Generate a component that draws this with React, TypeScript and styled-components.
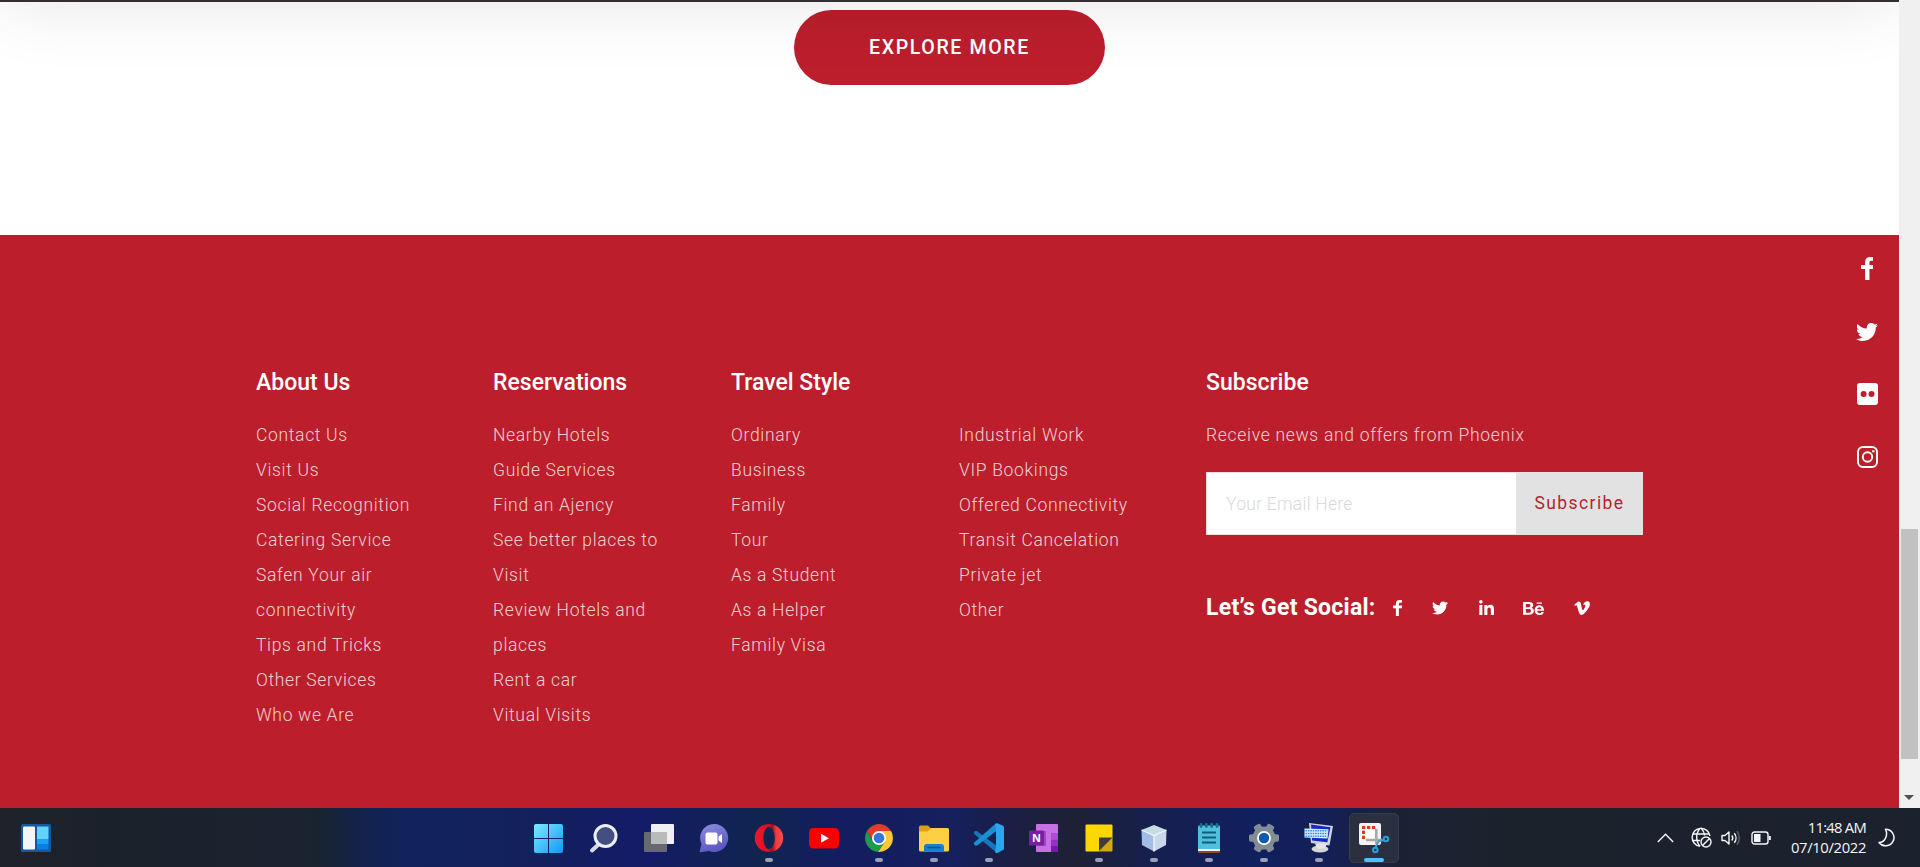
import React from "react";
import styled, { createGlobalStyle } from "styled-components";
import { FaTwitter, FaLinkedinIn, FaBehance, FaVimeoV } from "react-icons/fa";

const RED = "#bc1e2c";

const GlobalStyle = createGlobalStyle`
  * { box-sizing: border-box; }
  body { margin: 0; overflow: hidden; font-family: Roboto, "Liberation Sans", sans-serif; }
  ul { list-style: none; margin: 0; padding: 0; }
  h3, h4, p { margin: 0; }
`;

const Screen = styled.div`
  display: flex;
  flex-direction: column;
  width: 1920px;
  height: 867px;
  overflow: hidden;
`;

const Browser = styled.div`
  display: flex;
  height: 808px;
`;

const Page = styled.main`
  position: relative;
  flex: 1;
  overflow: hidden;
  background: #fff;
`;

const HeaderEdge = styled.div`
  position: absolute;
  z-index: 2;
  left: 0;
  right: 0;
  top: -118px;
  height: 120px;
  background: #332e30;
  box-shadow: 0 0 75px rgba(0, 0, 0, 0.11);
`;

const Hero = styled.section`
  display: flex;
  justify-content: center;
  height: 235px;
  padding-top: 10px;
`;

const ExploreButton = styled.button`
  width: 311px;
  height: 75px;
  padding: 0;
  border: 0;
  border-radius: 38px;
  background: ${RED};
  color: #fff;
  font: 500 19.6px/75px Roboto, sans-serif;
  letter-spacing: 1.6px;
`;

const Footer = styled.footer`
  display: flex;
  justify-content: space-between;
  height: 573px;
  padding: 0 21px 0 256px;
  background: ${RED};
`;

const Columns = styled.div`
  display: grid;
  grid-template-columns: 237px 238px 228px 247px 437px;
  padding-top: 131px;
`;

const Column = styled.section`
  display: flex;
  flex-direction: column;
`;

const Title = styled.h3`
  height: 34px;
  margin-bottom: 18px;
  color: #fff;
  font-size: 23px;
  font-weight: 500;
  line-height: 34px;
`;

const LinkItem = styled.li`
  color: rgba(255, 255, 255, 0.8);
  font-size: 17.5px;
  font-weight: 300;
  line-height: 35px;
  letter-spacing: 0.67px;
  white-space: pre-line;
`;

const Lead = styled.p`
  color: rgba(255, 255, 255, 0.8);
  font-size: 17.5px;
  font-weight: 300;
  line-height: 35px;
  letter-spacing: 0.7px;
`;

const Form = styled.form`
  display: flex;
  width: 437px;
  height: 63px;
  margin-top: 19px;
  border: 1px solid #f6d9dc;
  background: #fff;
`;

const Email = styled.input`
  flex: 1;
  min-width: 0;
  padding: 0 19px;
  border: 0;
  outline: 0;
  background: #fff;
  font: 300 17.5px Roboto, sans-serif;
  letter-spacing: 0.26px;
  &::placeholder { color: #d9d9d9; opacity: 1; }
`;

const SubmitButton = styled.button`
  width: 127px;
  margin: -1px;
  padding: 0 0 2px;
  border: 0;
  background: #e2e2e2;
  color: ${RED};
  font: 400 17.5px Roboto, sans-serif;
  letter-spacing: 1.4px;
`;

const SocialRow = styled.div`
  display: flex;
  align-items: center;
  height: 34px;
  margin-top: 55px;
  color: #fff;
`;

const SocialTitle = styled.h4`
  width: 178px;
  font-size: 23px;
  font-weight: 700;
  letter-spacing: 0.26px;
  white-space: nowrap;
`;

const SocialLink = styled.a<{ $w: number }>`
  display: flex;
  justify-content: center;
  width: ${(p) => p.$w}px;
  padding-top: 2px;
`;

const SideRail = styled.nav`
  display: flex;
  flex-direction: column;
  width: 22px;
  padding-top: 2px;
`;

const RailLink = styled.a`
  display: flex;
  align-items: center;
  justify-content: center;
  height: 63px;
  color: #fff;
  &:nth-child(n + 3) { padding-bottom: 1px; }
`;

const ScrollTrack = styled.div`
  display: flex;
  flex-direction: column;
  justify-content: space-between;
  align-items: center;
  width: 21px;
  padding: 529px 1px 8px 0;
  background: #f0f0f0;
`;

const ScrollThumb = styled.div`
  width: 17px;
  height: 230px;
  background: #c1c1c1;
`;

const ScrollArrow = styled.div`
  border: 5px solid transparent;
  border-top-color: #505050;
  border-bottom: 0;
`;

const Taskbar = styled.div`
  display: grid;
  grid-template-columns: 522px 880px 1fr;
  height: 59px;
  background: linear-gradient(90deg, #1f222a 0, #1b212b 100px, #19232f 320px, #12234c 360px, #11235a 400px,
    #13225a 500px, #131b66 640px, #11254f 760px, #131d60 830px, #15205e 950px, #1b1f40 1020px, #1e2136 1075px,
    #161f50 1160px, #10205f 1260px, #141f55 1330px, #1b2133 1400px, #1c222c 1500px, #1b212d 1920px);
`;

const TaskLeft = styled.div`
  display: flex;
  align-items: center;
  padding: 0 0 2px 20px;
`;

const TaskIcons = styled.div`
  display: flex;
`;

const TaskSlot = styled.div<{ $active?: boolean }>`
  display: flex;
  flex-direction: column;
  align-items: center;
  width: 50px;
  height: 50px;
  margin: 5px 3px 0 2px;
  padding-top: 9px;
  border-radius: 5px;
  border: 1px solid ${(p) => (p.$active ? "#353c4c" : "transparent")};
  background: ${(p) => (p.$active ? "#2a3040" : "none")};
`;

const RunMark = styled.span<{ $active?: boolean }>`
  width: ${(p) => (p.$active ? 20 : 8)}px;
  height: 4px;
  margin-top: 3px;
  border-radius: 2px;
  background: ${(p) => (p.$active ? "#4cc2ff" : "#9b9fb5")};
`;

const Tray = styled.div`
  display: flex;
  justify-content: flex-end;
  align-items: center;
  padding-right: 25px;
  color: #f5f7fa;
`;

const TrayIcon = styled.span<{ $gap: number }>`
  display: flex;
  margin-right: ${(p) => p.$gap}px;
`;

const Clock = styled.div`
  display: flex;
  flex-direction: column;
  align-items: flex-end;
  margin-right: 12px;
  padding-bottom: 2px;
  color: #f5f7fa;
  font: 400 14.8px/20px "Open Sans", "Noto Sans", sans-serif;
`;

const ClockLine = styled.span<{ $tracking: number }>`
  letter-spacing: ${(p) => p.$tracking}px;
`;

const columns = [
  { title: "About Us", links: ["Contact Us", "Visit Us", "Social Recognition", "Catering Service", "Safen Your air\nconnectivity", "Tips and Tricks", "Other Services", "Who we Are"] },
  { title: "Reservations", links: ["Nearby Hotels", "Guide Services", "Find an Ajency", "See better places to\nVisit", "Review Hotels and\nplaces", "Rent a car", "Vitual Visits"] },
  { title: "Travel Style", links: ["Ordinary", "Business", "Family", "Tour", "As a Student", "As a Helper", "Family Visa"] },
  { title: "", links: ["Industrial Work", "VIP Bookings", "Offered Connectivity", "Transit Cancelation", "Private jet", "Other"] },
];

const Icon = ({ children }: { children: React.ReactNode }) => (
  <svg width="32" height="32" viewBox="0 0 32 32">{children}</svg>
);

const FlickrIcon = () => (
  <svg width="21" height="22" viewBox="0 0 21 22">
    <path fillRule="evenodd" fill="#fff" d="M3 0h15a3 3 0 0 1 3 3v16a3 3 0 0 1-3 3H3a3 3 0 0 1-3-3V3a3 3 0 0 1 3-3zM6.600 8a3 3 0 1 0 0 6 3 3 0 0 0 0-6zm7.900 0a3 3 0 1 0 0 6 3 3 0 0 0 0-6z" />
  </svg>
);

const InstagramIcon = () => (
  <svg width="21" height="22" viewBox="0 0 21 22" fill="none" stroke="#fff" strokeWidth="1.900">
    <rect x="1" y="1" width="19" height="20" rx="5" />
    <circle cx="10.500" cy="11" r="4.700" />
    <circle cx="16.300" cy="5.300" r="1.300" fill="#fff" stroke="none" />
  </svg>
);

const FacebookIcon = ({ h }: { h: number }) => (
  <svg width={h * 0.56} height={h} viewBox="0 0 12.5 23" preserveAspectRatio="none">
    <path fill="#fff" d="M4 23V12H0V8h4V5.200C4 1.800 6 0 9 0h3.500v3.800H10C8.600 3.800 8.200 4.500 8.200 5.600V8h4.300v4H8.200v11z" />
  </svg>
);

const apps: { name: string; running?: boolean; active?: boolean; art: React.ReactNode }[] = [
  {
    name: "start",
    art: (
      <>
        <defs>
          <linearGradient id="win" x1="0" y1="0" x2="1" y2="1">
            <stop offset="0" stopColor="#7aebff" /><stop offset="1" stopColor="#1497f5" />
          </linearGradient>
        </defs>
        <path fill="url(#win)" d="M3 1h12v14H1V3a2 2 0 0 1 2-2zM16 1h12a2 2 0 0 1 2 2v12H16zM1 16h14v14H3a2 2 0 0 1-2-2zM16 16h14v12a2 2 0 0 1-2 2H16z" />
      </>
    ),
  },
  {
    name: "search",
    art: (
      <>
        <path d="M10.500 21.500L4 27.500" stroke="#d5dbe6" strokeWidth="4" strokeLinecap="round" />
        <circle cx="17.500" cy="13" r="10.500" fill="#454e80" stroke="#eceff5" strokeWidth="3" />
      </>
    ),
  },
  {
    name: "tasks",
    art: (
      <>
        <rect x="1" y="9" width="23" height="20" rx="1" fill="#66696f" />
        <rect x="8" y="1" width="23" height="20" rx="1" fill="#f0f0f4" />
        <path d="M8 9h16v12H9a1 1 0 0 1-1-1z" fill="#b9babc" />
      </>
    ),
  },
  {
    name: "chat",
    art: (
      <>
        <defs>
          <linearGradient id="chat" x1="0" y1="0" x2="0.4" y2="1">
            <stop offset="0" stopColor="#8f8fdd" /><stop offset="1" stopColor="#5a58c2" />
          </linearGradient>
        </defs>
        <path fill="url(#chat)" d="M16 1a14 14 0 1 1-5 27l-8.500 1.200a.8.8 0 0 1-.8-1L3.500 21A14 14 0 0 1 16 1z" />
        <rect x="7.500" y="9.500" width="12" height="12" rx="2" fill="#fff" />
        <path d="M20.500 13.500l3.500-2.500v9L20.500 17.500z" fill="#fff" />
      </>
    ),
  },
  {
    name: "opera",
    running: true,
    art: (
      <>
        <defs>
          <linearGradient id="op" x1="0" y1="0" x2="1" y2="0">
            <stop offset="0" stopColor="#f8152c" /><stop offset="0.45" stopColor="#d81125" /><stop offset="0.62" stopColor="#a30d1b" /><stop offset="0.75" stopColor="#f03a40" /><stop offset="1" stopColor="#fb4c4c" />
          </linearGradient>
        </defs>
        <path fillRule="evenodd" fill="url(#op)" d="M16 1a14.200 14 0 1 1 0 28 14.200 14 0 0 1 0-28zM15.700 4C12.500 4 10.500 9 10.500 15s2 11 5.200 11 6-4.500 6-11-2.800-11-6-11z" />
      </>
    ),
  },
  {
    name: "youtube",
    art: (
      <>
        <rect x="1" y="5" width="30" height="20.500" rx="4.500" fill="#f80000" />
        <path d="M13 10.700l8 4.500-8 4.600z" fill="#fff" />
      </>
    ),
  },
  {
    name: "chrome",
    running: true,
    art: (
      <>
        <path d="M3.900 8A14 14 0 0 1 28.100 8H16L10 18z" fill="#e33b2e" />
        <path d="M28.100 8A14 14 0 0 1 16 29l-1 0 7-11-6-10z" fill="#fcc934" />
        <path d="M3.900 8l6.100 10.500L16 22l6-3.500L15 29A14 14 0 0 1 3.900 8z" fill="#1d9a4b" />
        <circle cx="16" cy="15" r="7" fill="#fff" />
        <circle cx="16" cy="15" r="5.300" fill="#3474e0" />
      </>
    ),
  },
  {
    name: "files",
    running: true,
    art: (
      <>
        <path d="M1 4a1.500 1.500 0 0 1 1.500-1.500H10L13 5.500V11H1z" fill="#dc9f10" />
        <path d="M1 8.500h8.500L13 5h16.500A1.500 1.500 0 0 1 31 6.500V27a1.500 1.500 0 0 1-1.500 1.500h-27A1.500 1.500 0 0 1 1 27z" fill="#fdcf45" />
        <path d="M6 28.500V24a3 3 0 0 1 3-3h14a3 3 0 0 1 3 3v4.500z" fill="#1280d0" />
        <rect x="9.500" y="23.800" width="13" height="1.400" fill="#0a4f92" />
      </>
    ),
  },
  {
    name: "code",
    running: true,
    art: (
      <>
        <path d="M1.700 8.300a1.800 1.800 0 0 1 2.500-.1L24 23v7L1.200 11a1.700 1.700 0 0 1 0-2.200z" fill="#1377b9" />
        <path d="M1.200 19.500L22.500.800 24 7.500 4.400 22.300a1.800 1.800 0 0 1-2.400-.1l-.8-.8a1.400 1.400 0 0 1 0-1.900z" fill="#198fd6" />
        <path d="M22 1.200A2 2 0 0 1 24.200.2l5.500 2.400A2 2 0 0 1 31 4.500v21a2 2 0 0 1-1.300 1.800L24.200 30a2 2 0 0 1-2.200-1l1-5V7z" fill="#2ba5ee" />
      </>
    ),
  },
  {
    name: "notes",
    art: (
      <>
        <rect x="8" y="1" width="22" height="28" rx="1" fill="#c770e6" />
        <path d="M23 10h7v7h-7z" fill="#ae4bd5" />
        <path d="M23 17h7v6h-7z" fill="#9332bf" />
        <path d="M23 23h7v5a1 1 0 0 1-1 1h-6z" fill="#7719aa" />
        <path d="M8 8h10v15H8z" fill="#a046c4" />
        <rect x="1" y="7.500" width="15" height="15" rx="1.200" fill="#7a1fa2" />
        <text x="8.500" y="19" textAnchor="middle" fontFamily="Open Sans, sans-serif" fontWeight="700" fontSize="11" fill="#fff">N</text>
      </>
    ),
  },
  {
    name: "sticky",
    running: true,
    art: (
      <>
        <path d="M3.500 1.500h25a1 1 0 0 1 1 1V15L16 28.500H3.500a1 1 0 0 1-1-1v-25a1 1 0 0 1 1-1z" fill="#fcd703" />
        <path d="M29.500 14.500v13a1 1 0 0 1-1 1H16z" fill="#d9a514" />
        <path d="M16 14.500h13.500L16 28z" fill="#3c3b3d" />
      </>
    ),
  },
  {
    name: "cube",
    running: true,
    art: (
      <>
        <path d="M16 2l12.500 5L16 12.500 3.500 7z" fill="#c4dde2" />
        <path d="M3.500 7L16 12.500V28.500L4 22z" fill="#a3bde6" />
        <path d="M28.500 7L16 12.500V28.500L28 22z" fill="#c9d7ea" />
        <path d="M3.500 7L16 12.500 28.500 7M16 12.500v16" fill="none" stroke="#f3f9fb" strokeWidth="1.300" />
      </>
    ),
  },
  {
    name: "notepad",
    running: true,
    art: (
      <>
        <rect x="5" y="26" width="22" height="4" rx="1" fill="#8d4b25" />
        <rect x="5" y="25" width="22" height="3" fill="#f3f3f3" />
        <path d="M5 3.500a1 1 0 0 1 1-1h20a1 1 0 0 1 1 1V26H5z" fill="#50c0dc" />
        <path d="M9 9.500h14M9 14.500h14M9 19.500h14" stroke="#0b5f78" strokeWidth="2" />
        <path d="M8 1.500v2M13.300 1.500v2M18.600 1.500v2M24 1.500v2" stroke="#146f8d" strokeWidth="2.800" strokeLinecap="round" />
      </>
    ),
  },
  {
    name: "settings",
    running: true,
    art: (
      <>
        <circle cx="16" cy="15" r="11.500" fill="#828c94" />
        {[30, 90, 150].map((deg) => (
          <rect key={deg} x="12.200" y="0" width="7.600" height="30" rx="1.800" fill="#828c94" transform={`rotate(${deg} 16 15)`} />
        ))}
        <circle cx="16" cy="15" r="7" fill="#fff" />
        <circle cx="16" cy="15" r="5.200" fill="#0b5cab" />
      </>
    ),
  },
  {
    name: "keyboard",
    running: true,
    art: (
      <>
        <ellipse cx="17" cy="26" rx="8.500" ry="3.500" fill="#d6d6d8" />
        <path d="M6 0l24 3-3.500 19.500L8 20z" fill="#d0d4de" />
        <path d="M8 1.500l19.500 2.800-3.200 15L9 17.500z" fill="#152bba" />
        <path d="M12 20.500h12l-2 5h-8z" fill="#e5e5e7" />
        <path d="M1.500 5.500l24 .8-1 9.200-23-1z" fill="#dceefb" />
        <path d="M2.500 7.700h22M2.500 10.500h22M2.500 13.200h21" stroke="#3a8fe0" strokeWidth="1.500" strokeDasharray="1.600 .8" />
      </>
    ),
  },
  {
    name: "snip",
    running: true,
    active: true,
    art: (
      <>
        <rect x="1" y="0" width="22" height="22" rx="2" fill="#f2f3f5" />
        <path d="M5.500 16V4.500H18" fill="none" stroke="#d53d25" strokeWidth="3" strokeDasharray="3.300 1.700" />
        <path d="M7.500 6.500H17V16H7.500z" fill="#fff" />
        <path d="M8 17h16M18.300 6v15" stroke="#a8a8ac" strokeWidth="2.600" />
        <path d="M17.500 24l3.500-6 5-1" fill="none" stroke="#4d9cc8" strokeWidth="2" />
        <circle cx="28" cy="16" r="2.300" fill="none" stroke="#28a0de" strokeWidth="2" />
        <circle cx="17.300" cy="27" r="2.300" fill="none" stroke="#28a0de" strokeWidth="2" />
      </>
    ),
  },
];

export default function App() {
  return (
    <Screen>
      <GlobalStyle />
      <Browser>
        <Page>
          <HeaderEdge />
          <Hero>
            <ExploreButton>EXPLORE MORE</ExploreButton>
          </Hero>
          <Footer>
            <Columns>
              {columns.map((c, i) => (
                <Column key={i}>
                  <Title>{c.title}</Title>
                  <ul>
                    {c.links.map((l) => <LinkItem key={l}>{l}</LinkItem>)}
                  </ul>
                </Column>
              ))}
              <Column>
                <Title>Subscribe</Title>
                <Lead>Receive news and offers from Phoenix</Lead>
                <Form onSubmit={(e) => e.preventDefault()}>
                  <Email placeholder="Your Email Here" />
                  <SubmitButton>Subscribe</SubmitButton>
                </Form>
                <SocialRow>
                  <SocialTitle>Let’s Get Social:</SocialTitle>
                  <SocialLink $w={27}><FacebookIcon h={16} /></SocialLink>
                  <SocialLink $w={58}><FaTwitter size={16} /></SocialLink>
                  <SocialLink $w={35}><FaLinkedinIn size={17} /></SocialLink>
                  <SocialLink $w={58}><FaBehance size={21} /></SocialLink>
                  <SocialLink $w={39}><FaVimeoV size={18} /></SocialLink>
                </SocialRow>
              </Column>
            </Columns>
            <SideRail>
              <RailLink><FacebookIcon h={23} /></RailLink>
              <RailLink><FaTwitter size={22} /></RailLink>
              <RailLink><FlickrIcon /></RailLink>
              <RailLink><InstagramIcon /></RailLink>
            </SideRail>
          </Footer>
        </Page>
        <ScrollTrack>
          <ScrollThumb />
          <ScrollArrow />
        </ScrollTrack>
      </Browser>
      <Taskbar>
        <TaskLeft>
          <svg width="32" height="32" viewBox="0 0 32 32">
            <rect x="1" y="3" width="30" height="28" rx="1.500" fill="#14599e" />
            <rect x="3" y="5.500" width="12" height="23" rx="1" fill="#f4f5f7" />
            <path d="M17 5.500h11.500v12.500H17z" fill="#62d3fb" />
            <path d="M17 18h11.500v5H17z" fill="#1aa0f4" />
            <path d="M17 23h11.500v5.500H17z" fill="#0a7fe6" />
          </svg>
        </TaskLeft>
        <TaskIcons>
          {apps.map((a) => (
            <TaskSlot key={a.name} $active={a.active}>
              <Icon>{a.art}</Icon>
              {a.running && <RunMark $active={a.active} />}
            </TaskSlot>
          ))}
        </TaskIcons>
        <Tray>
          <TrayIcon $gap={17}>
            <svg width="17" height="10" viewBox="0 0 17 10" fill="none" stroke="#f5f7fa" strokeWidth="1.400"><path d="M.8 9l7.700-7.700L16.200 9" /></svg>
          </TrayIcon>
          <TrayIcon $gap={9}>
            <svg width="21" height="21" viewBox="0 0 21 21" fill="none" stroke="#f5f7fa" strokeWidth="1.400">
              <path d="M9 19.300A9 9 0 1 1 19 9M1.500 7h17M1.500 13.500H9M9.500 1C4.500 6 4.500 14 9 19.500M10 1c2 2 3.300 4.500 3.600 7.500" />
              <circle cx="15" cy="15" r="5" />
              <path d="M11.500 18.500l7-7" />
            </svg>
          </TrayIcon>
          <TrayIcon $gap={10}>
            <svg width="20" height="16" viewBox="0 0 20 16" fill="none" stroke="#f5f7fa" strokeWidth="1.400">
              <path d="M1 5.500h3L8 2v12l-4-3.500H1z" strokeLinejoin="round" />
              <path d="M10.800 5.500a4 4 0 0 1 0 5M13.300 3.300a7.500 7.500 0 0 1 0 9.500" />
              <path d="M16 1.300a11 11 0 0 1 0 13.400" stroke="#5a606b" />
            </svg>
          </TrayIcon>
          <TrayIcon $gap={19}>
            <svg width="21" height="14" viewBox="0 0 21 14" fill="none" stroke="#f5f7fa" strokeWidth="1.400">
              <rect x="1" y="1" width="16" height="12" rx="2.500" />
              <rect x="3" y="3" width="6.500" height="8" fill="#f5f7fa" stroke="none" />
              <path d="M18.800 5v4" strokeWidth="2" />
            </svg>
          </TrayIcon>
          <Clock>
            <ClockLine $tracking={-0.75}>11:48 AM</ClockLine>
            <ClockLine $tracking={-0.35}>07/10/2022</ClockLine>
          </Clock>
          <svg width="17" height="19" viewBox="0 0 17 19" fill="none" stroke="#f5f7fa" strokeWidth="1.500">
            <path d="M7.500 1.200A8.300 8.300 0 1 1 1 14.500C6.500 14.500 10.500 8 7.500 1.200z" strokeLinejoin="round" />
          </svg>
        </Tray>
      </Taskbar>
    </Screen>
  );
}
